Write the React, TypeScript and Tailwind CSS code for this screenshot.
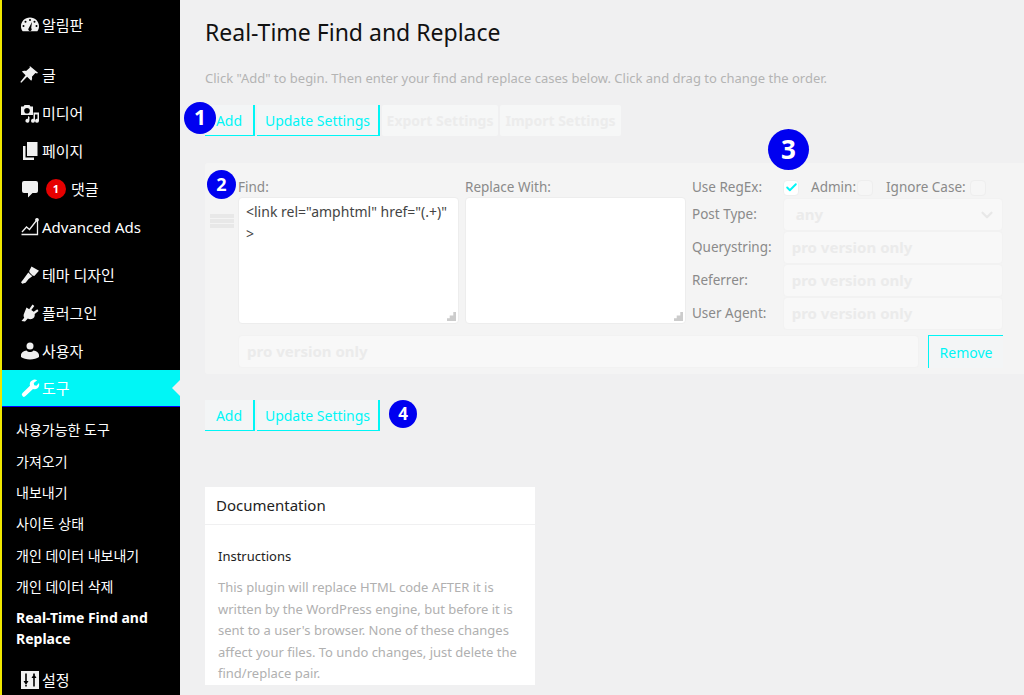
import React from "react";
import { Check, ChevronDown } from "lucide-react";

const FONT = "font-['Noto_Sans','Noto_Sans_CJK_KR',sans-serif]";

const Gauge = () => (
  <svg viewBox="0 0 20 20" className="w-[20px] h-[20px]" fill="currentColor">
    <path d="M10 2.5C4.8 2.5 1 6.6 1 11.2c0 1.9.6 3.7 1.7 5.1h14.6c1.1-1.4 1.7-3.2 1.7-5.1 0-4.6-3.800-8.700-9-8.700zM10 4a1 1 0 110 2 1 1 0 010-2zM5.500 5.800a1 1 0 110 2 1 1 0 010-2zM14.500 5.800a1 1 0 110 2 1 1 0 010-2zM3.500 10a1 1 0 110 2 1 1 0 010-2zM16.500 10a1 1 0 110 2 1 1 0 010-2zM12 7l-.8 6a1.700 1.700 0 11-2.400 0z" fillRule="evenodd" />
  </svg>
);
const Pin = () => (
  <svg viewBox="0 0 20 20" className="w-[20px] h-[20px]" fill="currentColor">
    <path d="M10.400 1.500l7.600 6.300-.9.700-1.700-.6-3.500 3.800c.5 1.700.1 3-.7 4l-4.100-4-5.800 6-1-.8 5.300-6.600-3.700-3.800c1.200-.9 2.700-1 4.200-.4l3.700-3.400-.1-1.700z" />
  </svg>
);
const Media = () => (
  <svg viewBox="0 0 20 20" className="w-[20px] h-[20px]" fill="currentColor">
    <path fillRule="evenodd" d="M4.500 2h5l1 1.500H13v8.500H1V3.500h2.500zM7 5a2.800 2.800 0 100 5.600A2.800 2.800 0 007 5z" />
    <path d="M13.500 9.500H19v8.200a2 2 0 11-1.500-1.900v-4.300h-2.500v6.200a2 2 0 11-1.500-1.900zM9.500 14l-.1 3.700a2 2 0 11-1.400-1.900V13z" />
  </svg>
);
const Pages = () => (
  <svg viewBox="0 0 20 20" className="w-[20px] h-[20px]" fill="currentColor">
    <path d="M7 1h10.500v14H7zM3 5h2.500v11.500H14V19H3z" />
  </svg>
);
const Bubble = () => (
  <svg viewBox="0 0 20 20" className="w-[20px] h-[20px]" fill="currentColor">
    <path d="M4 2h12a2 2 0 012 2v8a2 2 0 01-2 2h-3.500L8 18.500V14H4a2 2 0 01-2-2V4a2 2 0 012-2z" />
  </svg>
);
const ChartLine = () => (
  <svg viewBox="0 0 20 20" className="w-[20px] h-[20px]" fill="none" stroke="currentColor" strokeWidth="1.300">
    <path d="M1.500 17.500h16V3" />
    <path d="M2 15l4.500-5 3 2.500L16.500 3.500" />
    <circle cx="17" cy="2.800" r="1.200" fill="currentColor" />
  </svg>
);
const Brush = () => (
  <svg viewBox="0 0 20 20" className="w-[20px] h-[20px]" fill="currentColor">
    <path d="M11.500 1.500l7.500 4.200-4.700 5.300-1.800-.6-2.900-2.900-.4-1.400zM8.300 7.500l4 3.800-3.700 2.800-3 3.700-3.300.9-1.300-1.400 2-2.600z" />
  </svg>
);
const Plug = () => (
  <svg viewBox="0 0 20 20" className="w-[20px] h-[20px]" fill="currentColor">
    <path d="M12.500 1.500l1.800 1.500-3 4 2.400 1.800 3.600-2.500 1.200 1.800-3.800 3c.4 2.500-.7 4.400-2.900 5-1.500.4-3 0-4-.5L5 18.500l-3.500-.5 2.700-3.200c-.9-1.500-.7-3.300 0-4.500L6.500 4.500l2.700 1.700z" />
  </svg>
);
const User = () => (
  <svg viewBox="0 0 20 20" className="w-[20px] h-[20px]" fill="currentColor">
    <circle cx="10" cy="5" r="3.500" />
    <path d="M6.500 9.500c1 1 2.200 1.500 3.500 1.500s2.500-.5 3.500-1.500c2.800.5 5.500 2 5.500 4.800V16c-2 1.500-5.500 2.500-9 2.500S3 17.500 1 16v-1.700c0-2.800 2.700-4.300 5.500-4.800z" />
  </svg>
);
const Wrench = () => (
  <svg viewBox="0 0 20 20" className="w-[20px] h-[20px]" fill="currentColor">
    <path d="M14.500 1.500c1 0 1.900.3 2.700.8l-3.500 2.700.5 2.300 2.300.5L19 5c.6 2.200 0 4-1.500 5.200-1.300 1-3 1.200-4.500.7l-7.500 7.200a2 2 0 01-3-.1 2 2 0 010-2.900l7.500-7.300c-.5-1.500-.2-3.200.9-4.500 1-1 2.300-1.500 3.600-1.800z" />
  </svg>
);
const Sliders = () => (
  <svg viewBox="0 0 20 20" className="w-[20px] h-[20px]">
    <rect x="1" y="1" width="18" height="18" fill="currentColor" />
    <path d="M6 3.500v8M6 16.500v-1.500M14 3.500v1.500M14 8v8.500" stroke="#000" strokeWidth="1.600" />
    <path d="M3.500 11h5L6 15zM11.500 8h5L14 4z" fill="#000" />
  </svg>
);

function MenuRow({ icon, label, badge }: { icon: React.ReactNode; label: string; badge?: boolean }) {
  return (
    <div className="h-[38px] flex items-center text-white">
      <div className="w-[40px] flex justify-end pr-[2px] text-[#f0f0f0]">{icon}</div>
      <div className="ml-[0px] pl-[0px] flex items-center text-[15px] leading-[20px]">
        {badge && (
          <span className="w-[20px] h-[20px] rounded-full bg-[#e60000] text-white text-[11px] font-bold flex items-center justify-center ml-[4px] mr-[5px]">
            1
          </span>
        )}
        <span className={badge ? "" : "ml-[0px]"}>{label}</span>
      </div>
    </div>
  );
}

function Sidebar() {
  const sub = ["사용가능한 도구", "가져오기", "내보내기", "사이트 상태", "개인 데이터 내보내기", "개인 데이터 삭제"];
  return (
    <aside className="w-[180px] shrink-0 h-[695px] overflow-hidden bg-black border-l-[2px] border-[#f0e800]">
      <div className="pt-[6px]">
        <MenuRow icon={<Gauge />} label="알림판" />
      </div>
      <div className="pt-[12px]">
        <MenuRow icon={<Pin />} label="글" />
        <MenuRow icon={<Media />} label="미디어" />
        <MenuRow icon={<Pages />} label="페이지" />
        <MenuRow icon={<Bubble />} label="댓글" badge />
        <MenuRow icon={<ChartLine />} label="Advanced Ads" />
      </div>
      <div className="pt-[10px]">
        <MenuRow icon={<Brush />} label="테마 디자인" />
        <MenuRow icon={<Plug />} label="플러그인" />
        <MenuRow icon={<User />} label="사용자" />
      </div>
      <div className="relative h-[37px] bg-[#00f6f6] border-b-[1px] border-[#0000ff] flex items-center text-white">
        <div className="w-[40px] flex justify-end pr-[2px]"><Wrench /></div>
        <span className="text-[15px]">도구</span>
        <span className="absolute right-0 top-[10px] w-0 h-0 border-y-[8px] border-y-transparent border-r-[8px] border-r-[#f0f0f1]" />
      </div>
      <div className="pt-[7px] pl-[14px] pr-[8px] text-[14px] text-white">
        {sub.map((s) => (
          <div key={s} className="h-[31.4px] flex items-center">{s}</div>
        ))}
        <div className="font-bold leading-[21px] py-[5px] mb-[6px]">Real-Time Find and Replace</div>
      </div>
      <div className="pt-[1px]">
        <MenuRow icon={<Sliders />} label="설정" />
      </div>
    </aside>
  );
}

function Btn({ children, w }: { children: React.ReactNode; w: string }) {
  return (
    <span className={`relative h-[31px] bg-[#f3f5f6] text-[#00f6f6] text-[14px] flex items-center justify-center border-b-[1px] border-r-[2px] border-[#00f6f6] ${w}`}>
      {children}
    </span>
  );
}
function Dis({ children, w }: { children: React.ReactNode; w: string }) {
  return (
    <span className={`h-[31px] bg-[#f6f7f7] rounded-[2px] text-[#ececec] font-bold text-[14px] flex items-center justify-center ${w}`}>
      {children}
    </span>
  );
}
function Proinput({ w, text = "pro version only" }: { w: string; text?: string }) {
  return (
    <div className={`h-[33px] rounded-[4px] border-[1px] border-[#f2f2f2] bg-[#f8f8f8] text-[#ebebeb] font-bold text-[15px] flex items-center pl-[8px] ${w}`}>
      {text}
    </div>
  );
}
function Box() {
  return <span className="w-[16px] h-[16px] rounded-[4px] border-[1px] border-[#eeeeee] bg-[#f6f6f6] block" />;
}
function Area({ w, children }: { w: string; children?: React.ReactNode }) {
  return (
    <div className={`relative h-[127px] bg-white rounded-[4px] border-[1px] border-[#ededed] text-[14px] leading-[22px] text-[#444] px-[7px] py-[3px] ${w}`}>
      {children}
      <svg viewBox="0 0 10 10" className="absolute right-[2px] bottom-[2px] w-[9px] h-[9px]" fill="#ccc">
        <path d="M10 0v10H0v-3h3V4h4V0z" />
      </svg>
    </div>
  );
}
function Num({ n, cls }: { n: string; cls: string }) {
  return (
    <span className={`absolute rounded-full bg-[#0000f0] text-white font-bold flex items-center justify-center ${cls}`}>
      {n}
    </span>
  );
}

function Main() {
  const label = "text-[13.5px] text-[#8a8a8a]";
  return (
    <main className="relative flex-1 min-w-0 h-[695px] overflow-hidden bg-[#f0f0f1] pl-[25px]">
      <h1 className="pl-[-1px] text-[23px] leading-[30px] pt-[17px] text-[#111]">Real-Time Find and Replace</h1>
      <p className="mt-[22px] text-[13px] leading-[18px] text-[#b4b4b4] whitespace-nowrap">
        Click "Add" to begin. Then enter your find and replace cases below. Click and drag to change the order.
      </p>
      <div className="mt-[18px] flex gap-[2px] items-start">
        <Btn w="w-[50px]">Add</Btn>
        <Btn w="w-[123px]">Update Settings</Btn>
        <Dis w="w-[116px]">Export Settings</Dis>
        <Dis w="w-[121px]">Import Settings</Dis>
      </div>

      <section className="mt-[27px] h-[211px] bg-[#f4f4f4] rounded-l-[3px] flex pr-[21px] pt-[15px]">
        <div className="w-[33px] shrink-0 pl-[5px] pt-[36px] flex flex-col gap-[1px]">
          <span className="block w-[24px] h-[4px] bg-[#e8e8e8]" />
          <span className="block w-[24px] h-[4px] bg-[#e8e8e8]" />
          <span className="block w-[24px] h-[4px] bg-[#e8e8e8]" />
        </div>
        <div className="flex-1 min-w-0">
          <div className="flex">
            <div className="w-[227px] shrink-0">
              <div className={`${label} h-[19px] leading-[19px]`}>Find:</div>
              <Area w="w-[221px]">&lt;link rel="amphtml" href="(.+)" &gt;</Area>
            </div>
            <div className="w-[227px] shrink-0">
              <div className={`${label} h-[19px] leading-[19px]`}>Replace With:</div>
              <Area w="w-[221px]" />
            </div>
            <div className="flex-1 min-w-0">
              <div className="h-[19px] flex items-center text-[13.500px]">
                <span className={`${label} w-[91px]`}>Use RegEx:</span>
                <span className="w-[16px] h-[16px] rounded-[4px] bg-white border-[1px] border-[#eeeeee] flex items-center justify-center">
                  <Check size={13} strokeWidth={3.500} className="text-[#00f6f6]" />
                </span>
                <span className={`${label} ml-[12px] w-[46px]`}>Admin:</span>
                <Box />
                <span className={`${label} ml-[13px] w-[84px]`}>Ignore Case:</span>
                <Box />
              </div>
              <div className="mt-[1px] flex flex-col">
                <div className="flex items-center h-[33px]">
                  <span className={`${label} w-[91px]`}>Post Type:</span>
                  <div className="w-[221px] h-[33px] rounded-[4px] border-[1px] border-[#f2f2f2] bg-[#f8f8f8] text-[#ebebeb] font-bold text-[15px] flex items-center justify-between pl-[12px] pr-[6px]">
                    any
                    <ChevronDown size={18} strokeWidth={3} className="text-[#e8e8e8]" />
                  </div>
                </div>
                {["Querystring:", "Referrer:", "User Agent:"].map((t) => (
                  <div key={t} className="flex items-center h-[33px]">
                    <span className={`${label} w-[91px]`}>{t}</span>
                    <Proinput w="w-[221px]" />
                  </div>
                ))}
              </div>
            </div>
          </div>
          <div className="mt-[5px] flex justify-between items-start">
            <Proinput w="w-[681px]" />
            <span className="w-[75px] h-[33px] bg-[#f3f5f6] text-[#00f6f6] text-[14px] flex items-center justify-center border-t-[1px] border-l-[1px] border-[#00f6f6]">
              Remove
            </span>
          </div>
        </div>
      </section>

      <div className="mt-[26px] flex gap-[2px] items-start">
        <Btn w="w-[50px]">Add</Btn>
        <Btn w="w-[123px]">Update Settings</Btn>
      </div>

      <section className="mt-[56px] w-[330px] bg-white">
        <div className="h-[38px] pl-[11px] flex items-center text-[15px] text-[#222] border-b-[1px] border-[#f0f0f1]">Documentation</div>
        <div className="px-[13px] pt-[22px]">
          <div className="text-[13px] leading-[18px] text-[#222]">Instructions</div>
          <p className="mt-[12px] text-[13px] leading-[21.500px] text-[#b0b0b0]">
            This plugin will replace HTML code AFTER it is written by the WordPress engine, but before it is sent to a user's browser. None of these changes affect your files. To undo changes, just delete the find/replace pair.
          </p>
        </div>
      </section>

      <Num n="1" cls="left-[4px] top-[102px] w-[32px] h-[32px] text-[21px]" />
      <Num n="2" cls="left-[27px] top-[170px] w-[29px] h-[29px] text-[18px]" />
      <Num n="3" cls="left-[588px] top-[129px] w-[41px] h-[41px] text-[26px]" />
      <Num n="4" cls="left-[209px] top-[400px] w-[28px] h-[28px] text-[17px]" />
    </main>
  );
}

export default function App() {
  return (
    <div className={`${FONT} flex w-[1024px] h-[695px] overflow-hidden`}>
      <Sidebar />
      <Main />
    </div>
  );
}
